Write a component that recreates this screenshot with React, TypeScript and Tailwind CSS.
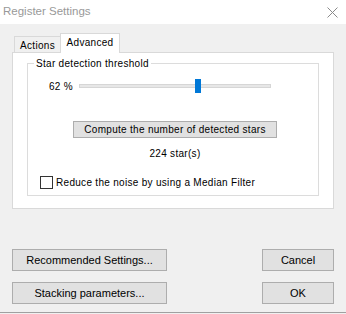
const THRESHOLD = 62;

function WinButton({ children }: { children: React.ReactNode }) {
  return (
    <button
      type="button"
      className="flex h-[22px] items-center justify-center border border-[#adadad] bg-[#e1e1e1] text-[11px] text-black"
    >
      {children}
    </button>
  );
}

export default function App() {
  return (
    <div className="flex h-[314px] w-[346px] flex-col bg-[#f0f0f0] font-['Liberation_Sans',Arial,sans-serif] text-black">
      {/* title bar */}
      <div className="flex h-[24px] items-center justify-between bg-white pl-[3px] pr-[8px]">
        <span className="text-[11.5px] text-[#999999]">Register Settings</span>
        <svg width="11" height="11" viewBox="0 0 11 11" className="text-[#8a8a8a]">
          <path d="M0.5 0.5 L10.5 10.5 M10.5 0.5 L0.5 10.5" stroke="currentColor" strokeWidth="1" fill="none" />
        </svg>
      </div>

      <div className="px-[12px]">
        {/* tabs */}
        <div className="mt-[9px] flex items-end pl-[2px] text-[10px] tracking-[0.3px]">
          <div className="flex h-[16px] w-[46px] items-center justify-center border border-b-0 border-r-0 border-[#d9d9d9] pt-[1px]">
            Actions
          </div>
          <div className="relative z-10 -mb-px flex h-[20px] w-[60px] items-center justify-center border border-b-0 border-[#d9d9d9] bg-white pb-[2px]">
            Advanced
          </div>
        </div>

        {/* tab panel */}
        <div className="h-[157px] border border-[#d9d9d9] bg-white px-[14px] pt-[10px] text-[10px] tracking-[0.3px]">
          <div className="relative h-[133px] border border-[#dcdcdc]">
            <span className="absolute -top-[7px] left-[6px] bg-white px-[2px] leading-[13px]">
              Star detection threshold
            </span>

            {/* slider */}
            <div className="mt-[15px] flex h-[14px] items-center">
              <span className="w-[45px] text-right">{THRESHOLD} %</span>
              <div className="relative ml-[6px] h-[4px] w-[192px] border border-[#d6d6d6] bg-[#e7e7e7]">
                <div
                  className="absolute -top-[6px] h-[14px] w-[6px] bg-[#0078d7]"
                  style={{ left: Math.round(((192 - 6) * THRESHOLD) / 100) }}
                />
              </div>
            </div>

            <div className="ml-[45px] mt-[28px] flex w-[204px] flex-col items-center">
              <button
                type="button"
                className="h-[17px] w-full border border-[#adadad] bg-[#e1e1e1] text-[10px] tracking-[0.3px]"
              >
                Compute the number of detected stars
              </button>
              <span className="mt-[9px] leading-[13px]">224 star(s)</span>
            </div>

            <label className="ml-[12px] mt-[15px] flex items-center">
              <span className="h-[13px] w-[13px] border border-[#333333] bg-white" />
              <span className="ml-[3px]">Reduce the noise by using a Median Filter</span>
            </label>
          </div>
        </div>

        {/* dialog buttons */}
        <div className="mt-[40px] grid grid-cols-[155px_72px] justify-between gap-y-[11px]">
          <WinButton>Recommended Settings...</WinButton>
          <WinButton>Cancel</WinButton>
          <WinButton>Stacking parameters...</WinButton>
          <WinButton>OK</WinButton>
        </div>
      </div>

      <div className="mt-auto mb-[1px] h-px bg-[#a0a0a0]" />
    </div>
  );
}
